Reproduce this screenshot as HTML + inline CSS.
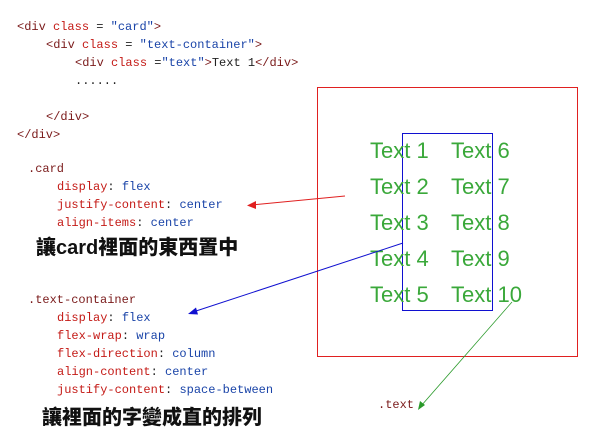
<!DOCTYPE html>
<html><head><meta charset="utf-8"><style>
body{margin:0;width:600px;height:442px;background:#fff;position:relative;overflow:hidden;font-family:"Liberation Mono",monospace;}
.l{position:absolute;font-size:12px;line-height:18px;white-space:pre;color:#222;}
.r{color:#c41a16}.b{color:#1a44a8}.k{color:#7a1a1a}
.zh{position:absolute;font-family:"Liberation Sans","Noto Sans CJK TC",sans-serif;font-weight:900;font-size:20px;color:#111;}
.g{position:absolute;font-family:"Liberation Sans",sans-serif;font-size:22px;color:#3aa83a;line-height:22px;}
</style></head><body>
<div class="l" style="left:17px;top:18px"><span class="k">&lt;div</span> <span class="r">class</span> = <span class="b">"card"</span><span class="k">&gt;</span></div>
<div class="l" style="left:46px;top:36px"><span class="k">&lt;div</span> <span class="r">class</span> = <span class="b">"text-container"</span><span class="k">&gt;</span></div>
<div class="l" style="left:75px;top:54px"><span class="k">&lt;div</span> <span class="r">class</span> =<span class="b">"text"</span><span class="k">&gt;</span>Text 1<span class="k">&lt;/div&gt;</span></div>
<div class="l" style="left:75px;top:72px">......</div>
<div class="l k" style="left:46px;top:108px">&lt;/div&gt;</div>
<div class="l k" style="left:17px;top:126px">&lt;/div&gt;</div>
<div class="l k" style="left:28px;top:160px">.card</div>
<div class="l" style="left:57px;top:178px"><span class="r">display</span>: <span class="b">flex</span></div>
<div class="l" style="left:57px;top:196px"><span class="r">justify-content</span>: <span class="b">center</span></div>
<div class="l" style="left:57px;top:214px"><span class="r">align-items</span>: <span class="b">center</span></div>
<div class="zh" style="left:36px;top:231px">讓card裡面的東西置中</div>
<div class="l k" style="left:28px;top:291px">.text-container</div>
<div class="l" style="left:57px;top:309px"><span class="r">display</span>: <span class="b">flex</span></div>
<div class="l" style="left:57px;top:327px"><span class="r">flex-wrap</span>: <span class="b">wrap</span></div>
<div class="l" style="left:57px;top:345px"><span class="r">flex-direction</span>: <span class="b">column</span></div>
<div class="l" style="left:57px;top:363px"><span class="r">align-content</span>: <span class="b">center</span></div>
<div class="l" style="left:57px;top:381px"><span class="r">justify-content</span>: <span class="b">space-between</span></div>
<div class="zh" style="left:42px;top:401px">讓裡面的字變成直的排列</div>
<div class="l k" style="left:378px;top:396px">.text</div>
<div style="position:absolute;left:317px;top:87px;width:259px;height:268px;border:1.5px solid #e02020"></div>
<div style="position:absolute;left:402px;top:133px;width:89px;height:176px;border:1.5px solid #1010d0"></div>
<div class="g" style="left:370px;top:140px">Text 1</div><div class="g" style="left:370px;top:176px">Text 2</div><div class="g" style="left:370px;top:212px">Text 3</div><div class="g" style="left:370px;top:248px">Text 4</div><div class="g" style="left:370px;top:284px">Text 5</div>
<div class="g" style="left:451px;top:140px">Text 6</div><div class="g" style="left:451px;top:176px">Text 7</div><div class="g" style="left:451px;top:212px">Text 8</div><div class="g" style="left:451px;top:248px">Text 9</div><div class="g" style="left:451px;top:284px">Text 10</div>
<svg width="600" height="442" style="position:absolute;left:0;top:0">
<line x1="345" y1="196" x2="252" y2="205" stroke="#e02020" stroke-width="1"/><polygon points="247,205.5 256,201 256,209" fill="#e02020"/>
<line x1="403" y1="243" x2="193" y2="312" stroke="#1010d0" stroke-width="1"/><polygon points="188,314 196,307.5 198,314.5" fill="#1010d0"/>
<line x1="512" y1="302" x2="421" y2="406" stroke="#2a9a2a" stroke-width="0.8"/><polygon points="418,410 420,401 425,405" fill="#2a9a2a"/>
</svg>
</body></html>
